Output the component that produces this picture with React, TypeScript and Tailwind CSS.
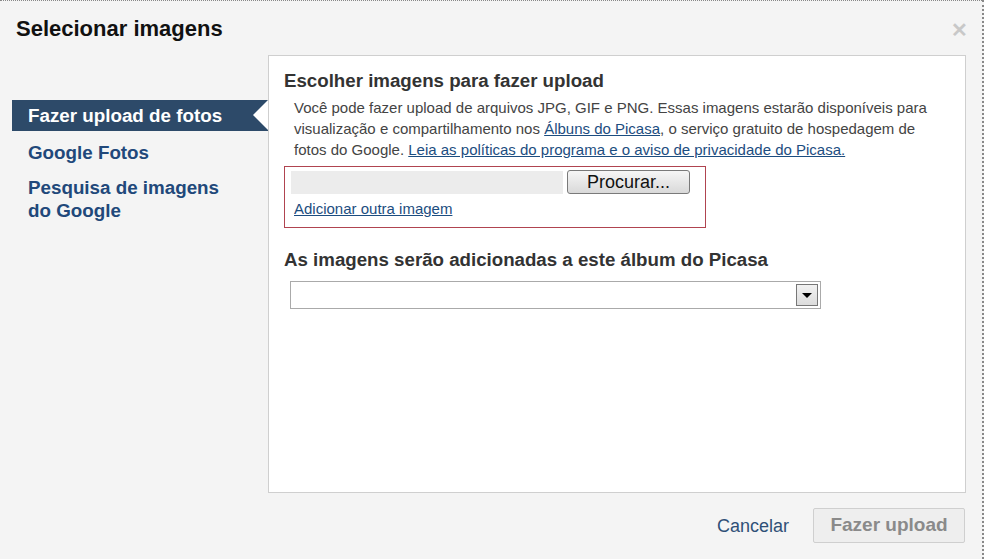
import { useState } from 'react';

const font = { fontFamily: '"Liberation Sans", Arial, sans-serif' };

const sideItems = ['Fazer upload de fotos', 'Google Fotos', 'Pesquisa de imagens do Google'];

function SideNav() {
  const [active, setActive] = useState(0);
  return (
    <nav className="w-[268px] shrink-0 pt-[45px] pl-3">
      <ul className="flex flex-col">
        {sideItems.map((label, i) =>
          i === active ? (
            <li
              key={label}
              className="relative h-[31px] flex items-center pl-4 bg-[#2d4a69] text-white font-bold text-[18.8px] leading-[23px]"
            >
              {label}
              <span className="absolute right-0 top-0 w-0 h-0 border-y-[15.5px] border-y-transparent border-r-[15px] border-r-white" />
            </li>
          ) : (
            <li key={label} className="pl-4 pr-10 pt-[10px] pb-0">
              <button
                onClick={() => setActive(i)}
                className="text-left text-[#21487a] font-bold text-[18.8px] leading-[23px] cursor-pointer"
              >
                {label}
              </button>
            </li>
          )
        )}
      </ul>
    </nav>
  );
}

function UploadPanel() {
  return (
    <section className="w-[698px] h-[438px] bg-white border border-[#cfcfcf] pt-[14px] pl-[15px]">
      <h2 className="text-[18.7px] leading-[22px] font-bold text-[#333]">Escolher imagens para fazer upload</h2>
      <p className="mt-[5px] ml-[10px] w-[650px] text-[15px] leading-[21px] text-[#444]">
        Você pode fazer upload de arquivos JPG, GIF e PNG. Essas imagens estarão disponíveis para visualização e
        compartilhamento nos{' '}
        <a href="#" className="text-[#1c4d80] underline">
          Álbuns do Picasa
        </a>
        , o serviço gratuito de hospedagem de fotos do Google.{' '}
        <a href="#" className="text-[#1c4d80] underline">
          Leia as políticas do programa e o aviso de privacidade do Picasa.
        </a>
      </p>

      {/* File picker */}
      <div className="mt-[6px] w-[422px] h-[62px] border border-[#b04450] pl-[6px] pt-[3px]">
        <div className="flex items-start gap-[4px]">
          <div className="mt-[1px] w-[272px] h-[23px] bg-[#ececec]" />
          <button className="w-[123px] h-[24px] rounded-[3px] border border-[#7a7a7a] bg-gradient-to-b from-[#f6f6f6] to-[#d9d9d9] text-[18px] leading-[20px] text-[#111]">
            Procurar...
          </button>
        </div>
        <a href="#" className="block mt-[6px] ml-[3px] text-[15px] leading-[18px] text-[#1c4d80] underline">
          Adicionar outra imagem
        </a>
      </div>

      <h2 className="mt-[21px] text-[18.7px] leading-[22px] font-bold text-[#333]">
        As imagens serão adicionadas a este álbum do Picasa
      </h2>
      <div className="mt-[10px] ml-[6px] w-[531px] h-[28px] border border-[#aaaaaa] flex items-center justify-end pr-[2px]">
        <div className="w-[22px] h-[22px] border border-[#777] bg-gradient-to-b from-[#f2f2f2] to-[#dcdcdc] flex items-center justify-center">
          <span className="w-0 h-0 border-x-[5px] border-x-transparent border-t-[5px] border-t-black" />
        </div>
      </div>
    </section>
  );
}

export default function App() {
  return (
    <div
      style={font}
      className="w-[984px] h-[559px] overflow-hidden bg-[#f4f4f4] border-t border-dotted border-t-[#888] border-r-2 border-r-[#888] flex flex-col"
    >
      <header className="h-[54px] shrink-0 flex items-start justify-between pl-4 pr-[14px] pt-[15px]">
        <h1 className="text-[22px] leading-[26px] font-bold text-[#111]">Selecionar imagens</h1>
        <button className="mt-[6px] text-[#c8c8c8] text-[20px] leading-[16px] font-bold">✕</button>
      </header>

      <div className="flex h-[438px] shrink-0">
        <SideNav />
        <UploadPanel />
      </div>

      <footer className="flex justify-end items-center gap-[24px] pr-[17px] pt-[15px]">
        <a href="#" className="text-[18px] leading-[20px] text-[#2f5077]">
          Cancelar
        </a>
        <button className="w-[152px] h-[35px] rounded-[2px] border border-[#cfcfcf] bg-[#eeeeee] text-[19px] font-bold text-[#8a8a8a]">
          Fazer upload
        </button>
      </footer>
    </div>
  );
}
